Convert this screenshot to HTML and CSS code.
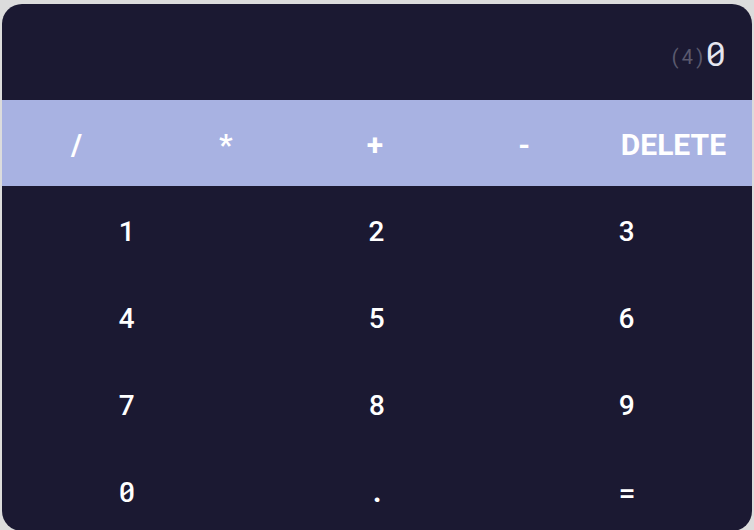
FILE: index.html
```html
<!DOCTYPE html>
<html>
<head>
<meta charset="utf-8">
<link rel="stylesheet" href="styles.css">
</head>
<body>
<div class="calc">
  <div class="display">
    <span class="prev">(4)</span><span class="current">0</span>
  </div>
  <div class="operators">
    <button class="op">/</button>
    <button class="op">*</button>
    <button class="op">+</button>
    <button class="op">-</button>
    <button class="op">DELETE</button>
  </div>
  <div class="digits">
    <button class="digit">1</button>
    <button class="digit">2</button>
    <button class="digit">3</button>
    <button class="digit">4</button>
    <button class="digit">5</button>
    <button class="digit">6</button>
    <button class="digit">7</button>
    <button class="digit">8</button>
    <button class="digit">9</button>
    <button class="digit">0</button>
    <button class="digit">.</button>
    <button class="digit">=</button>
  </div>
</div>
</body>
</html>
```
FILE: styles.css
```css
html, body {
  margin: 0;
  padding: 0;
  background: #dcdcdc;
  height: 100%;
  overflow: hidden;
}
.calc {
  margin: 4px 2px 0 2px;
  height: 527px;
  background: #1b1932;
  border-radius: 20px;
  overflow: hidden;
  font-family: "Roboto Mono", "DejaVu Sans Mono", monospace;
}
.display {
  height: 96px;
  display: flex;
  justify-content: flex-end;
  align-items: center;
  padding-right: 26px;
  box-sizing: border-box;
}
.prev {
  color: #5a596e;
  font-size: 20px;
  margin-top: 8px;
}
.current {
  color: #e6e6f0;
  font-size: 34px;
}
.operators {
  height: 86px;
  background: #a8b2e2;
  display: grid;
  grid-template-columns: repeat(5, 1fr);
  padding-right: 4px;
}
button {
  border: none;
  background: transparent;
  color: #ffffff;
  padding: 0;
  cursor: pointer;
}
.op {
  font-family: "Roboto", "Liberation Sans", sans-serif;
  font-weight: 700;
  font-size: 30px;
  padding-top: 2px;
}
.digits {
  display: grid;
  grid-template-columns: repeat(3, 1fr);
  grid-auto-rows: 87px;
}
.digit {
  font-family: "Roboto Mono", "DejaVu Sans Mono", monospace;
  font-size: 28px;
  font-weight: 500;
  padding-top: 2px;
}
```
